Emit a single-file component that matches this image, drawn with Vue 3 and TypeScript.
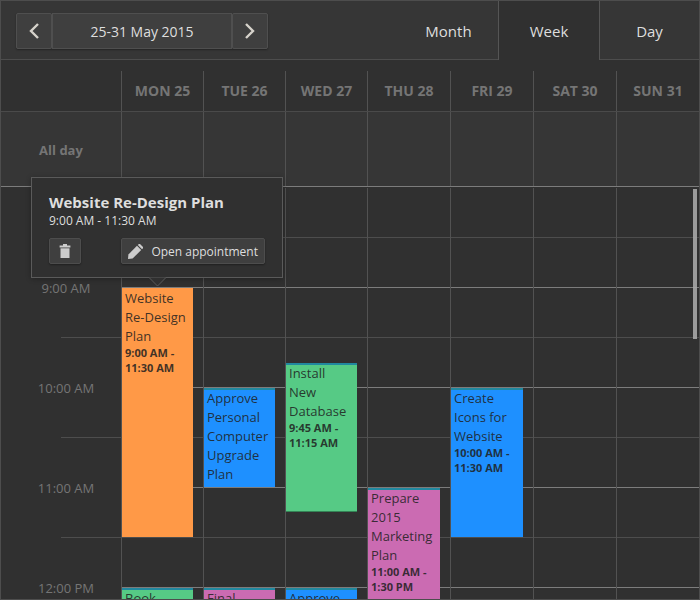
<script setup lang="ts">
import { ref } from 'vue'

type View = 'Month' | 'Week' | 'Day'
type Tone = 'orange' | 'blue' | 'green' | 'pink'

interface Appointment {
  title: string
  time: string
  /** Minutes from midnight */
  start: number
  end: number
  tone: Tone
  selected?: boolean
}

interface DayColumn {
  label: string
  items: Appointment[]
}

const FIRST_HOUR = 8
const LAST_HOUR = 12
const SLOT_MINUTES = 15

const views: View[] = ['Month', 'Week', 'Day']
const activeView = ref<View>('Week')

const at = (hours: number, minutes = 0): number => hours * 60 + minutes

const days: DayColumn[] = [
  {
    label: 'MON 25',
    items: [
      { title: 'Website Re-Design Plan', time: '9:00 AM - 11:30 AM', start: at(9), end: at(11, 30), tone: 'orange', selected: true },
      { title: 'Book', time: '', start: at(12), end: at(13), tone: 'green' },
    ],
  },
  {
    label: 'TUE 26',
    items: [
      { title: 'Approve Personal Computer Upgrade Plan', time: '', start: at(10), end: at(11), tone: 'blue' },
      { title: 'Final', time: '', start: at(12), end: at(13, 30), tone: 'pink' },
    ],
  },
  {
    label: 'WED 27',
    items: [
      { title: 'Install New Database', time: '9:45 AM - 11:15 AM', start: at(9, 45), end: at(11, 15), tone: 'green' },
      { title: 'Approve', time: '', start: at(12), end: at(13), tone: 'blue' },
    ],
  },
  {
    label: 'THU 28',
    items: [
      { title: 'Prepare 2015 Marketing Plan', time: '11:00 AM - 1:30 PM', start: at(11), end: at(13, 30), tone: 'pink' },
    ],
  },
  {
    label: 'FRI 29',
    items: [
      { title: 'Create Icons for Website', time: '10:00 AM - 11:30 AM', start: at(10), end: at(11, 30), tone: 'blue' },
    ],
  },
  { label: 'SAT 30', items: [] },
  { label: 'SUN 31', items: [] },
]

const hours: string[] = []
for (let h = FIRST_HOUR + 1; h <= LAST_HOUR; h++) {
  hours.push(`${h > 12 ? h - 12 : h}:00 ${h >= 12 ? 'PM' : 'AM'}`)
}

const line = (minutes: number): number => (minutes - FIRST_HOUR * 60) / SLOT_MINUTES + 1
const span = (a: Appointment) => ({ gridRow: `${line(a.start)} / ${line(a.end)}` })
</script>

<template>
  <main class="scheduler">
    <header class="toolbar">
      <div class="toolbar-left">
        <div class="navigator">
          <button type="button" class="nav-step" aria-label="Previous week">
            <svg viewBox="0 0 12 18" width="12" height="18"><path d="M10 2 L3 9 L10 16" /></svg>
          </button>
          <button type="button" class="nav-range">25-31 May 2015</button>
          <button type="button" class="nav-step" aria-label="Next week">
            <svg viewBox="0 0 12 18" width="12" height="18"><path d="M2 2 L9 9 L2 16" /></svg>
          </button>
        </div>
      </div>
      <nav class="views">
        <button
          v-for="view in views"
          :key="view"
          type="button"
          class="view"
          :class="{ active: view === activeView }"
          @click="activeView = view"
        >{{ view }}</button>
      </nav>
    </header>

    <div class="columns day-names">
      <div></div>
      <div v-for="day in days" :key="day.label" class="day-name">{{ day.label }}</div>
    </div>

    <div class="columns all-day">
      <div class="all-day-label">All day</div>
      <div v-for="day in days" :key="day.label" class="all-day-cell"></div>
    </div>

    <section class="body">
      <div class="scroller">
        <div class="columns timetable">
          <div class="hours">
            <div v-for="hour in hours" :key="hour" class="hour">{{ hour }}</div>
          </div>
          <div v-for="day in days" :key="day.label" class="day">
            <article
              v-for="item in day.items"
              :key="item.title"
              class="appointment"
              :class="[item.tone, { selected: item.selected }]"
              :style="span(item)"
            >
              <div class="appointment-title">{{ item.title }}</div>
              <div v-if="item.time" class="appointment-time">{{ item.time }}</div>
            </article>
          </div>
        </div>
      </div>
      <div class="thumb"></div>
    </section>

    <aside class="popover">
      <h2>Website Re-Design Plan</h2>
      <p>9:00 AM - 11:30 AM</p>
      <div class="popover-actions">
        <button type="button" class="action delete" aria-label="Delete appointment">
          <svg viewBox="0 0 12 14" width="12" height="14">
            <path d="M4 0h4v1.4h3.4v2H.6v-2H4z" />
            <path d="M1.5 4.3h9V14h-9z" />
          </svg>
        </button>
        <button type="button" class="action">
          <svg viewBox="0 0 15 15" width="15" height="15">
            <path d="M0 15l.4-4.6L9 1.8l4.2 4.2L4.6 14.6z" />
            <path d="M9.8 1L10.8 0H12l3 3v1.2l-1 1z" />
          </svg>
          <span>Open appointment</span>
        </button>
      </div>
      <svg class="pointer" viewBox="0 0 17 10" width="17" height="10">
        <path d="M0 0.5L8.5 9L17 0.5" />
      </svg>
    </aside>
  </main>
</template>

<style>
body {
  background: #303030;
}
</style>

<style scoped>
.scheduler {
  position: relative;
  box-sizing: border-box;
  display: flex;
  flex-direction: column;
  height: 100vh;
  border: 1px solid #4d4d4d;
  background: #303030;
  color: #dedede;
  font-family: "Open Sans", "Noto Sans", sans-serif;
  font-size: 13px;
}

button {
  margin: 0;
  padding: 0;
  font: inherit;
  color: inherit;
  cursor: pointer;
}

.toolbar {
  display: flex;
  flex: none;
  height: 59px;
}

.toolbar-left {
  flex: 1;
  padding: 12px 15px 0;
  border-bottom: 1px solid #4d4d4d;
  background: #363636;
}

.navigator {
  display: flex;
  width: 252px;
  height: 36px;
  border-radius: 2px;
  box-shadow: 0 1px 2px rgba(0, 0, 0, 0.35);
}

.nav-step,
.nav-range {
  display: flex;
  align-items: center;
  justify-content: center;
  box-sizing: border-box;
  border: 1px solid #4f4f4f;
  background: #3f3f3f;
}

.nav-step {
  width: 36px;
  border-radius: 2px;
}

.nav-step path {
  fill: none;
  stroke: #d6d2cb;
  stroke-width: 2.4;
}

.nav-range {
  flex: 1;
  font-size: 14px;
}

.views {
  display: flex;
}

.view {
  box-sizing: border-box;
  width: 99px;
  padding-top: 1px;
  border: 0;
  border-bottom: 1px solid #4d4d4d;
  background: #363636;
  font-size: 15px;
}

.view.active {
  width: 102px;
  padding-top: 0;
  border: 0 solid #555555;
  border-width: 0 1px;
  background: #303030;
}

.columns {
  display: grid;
  grid-template-columns: 120px 82fr 82fr 82fr 83fr 83fr 83fr 83fr;
}

.day-names {
  flex: none;
  padding-top: 11px;
}

.day-names,
.all-day {
  color: #757575;
  font-weight: 700;
}

.day-name {
  height: 40px;
  border-left: 1px solid #525252;
  font-size: 14px;
  line-height: 40px;
  text-align: center;
  white-space: nowrap;
}

.all-day {
  flex: none;
  height: 74px;
  border-top: 1px solid #4a4a4a;
  border-bottom: 1px solid #7c7c7c;
  background: #363636;
}

.all-day-label {
  align-self: center;
  padding-top: 2px;
  text-align: center;
}

.all-day-cell {
  border-left: 1px solid #525252;
}

.body {
  position: relative;
  flex: 1;
  min-height: 0;
}

.scroller {
  height: 100%;
  overflow-y: auto;
  scrollbar-width: none;
}

.timetable {
  padding-top: 1px;
}

.hours {
  padding-top: 50px;
  background-image: repeating-linear-gradient(
    transparent 0 49px,
    #4d4d4d 49px 50px,
    transparent 50px 100px
  );
  background-position: 60px 0;
  background-size: 60px 100%;
  background-repeat: no-repeat;
}

.hour {
  height: 100px;
  padding-left: 10px;
  color: #757575;
  line-height: 100px;
  text-align: center;
}

.day {
  display: grid;
  grid-auto-rows: 25px;
  align-content: start;
  border-left: 1px solid #525252;
  background: repeating-linear-gradient(
    transparent 0 49px,
    #4d4d4d 49px 50px,
    transparent 50px 99px,
    #7c7c7c 99px 100px
  );
}

.appointment {
  box-sizing: border-box;
  overflow: hidden;
  margin: 0 10px 1px 0;
  padding: 0 3px;
  border-top: 2px solid #21889f;
  color: rgba(32, 32, 32, 0.86);
}

.appointment.selected {
  padding-top: 2px;
  border-top: 0;
}

.orange {
  background: #ff9947;
}

.blue {
  background: #1e90ff;
}

.green {
  border-bottom: 1px solid #348456;
  background: #56ca85;
}

.pink {
  background: #cb6bb2;
}

.appointment-title {
  margin: -1px 0;
  line-height: 19px;
}

.appointment-time {
  font-size: 11px;
  font-weight: 700;
  line-height: 15px;
}

.thumb {
  position: absolute;
  top: 2px;
  right: 2px;
  width: 4px;
  height: 150px;
  background: rgba(170, 170, 170, 0.88);
}

.popover {
  position: absolute;
  top: 176px;
  left: 30px;
  box-sizing: border-box;
  width: 252px;
  padding: 15px 17px 13px;
  border: 1px solid #5a5a5a;
  background: #303030;
  box-shadow: 0 1px 5px rgba(0, 0, 0, 0.3);
}

.popover h2 {
  margin: 0;
  font-size: 15px;
  line-height: 18px;
  white-space: nowrap;
}

.popover p {
  margin: 0 0 7px;
  font-size: 12px;
  line-height: 20px;
}

.popover-actions {
  display: flex;
  justify-content: space-between;
}

.action {
  display: flex;
  align-items: center;
  justify-content: center;
  gap: 8px;
  box-sizing: border-box;
  height: 26px;
  padding: 0 6px;
  border: 1px solid #4d4d4d;
  border-radius: 2px;
  background: #3f3f3f;
  box-shadow: 0 1px 2px rgba(0, 0, 0, 0.35);
  font-size: 12px;
  white-space: nowrap;
}

.action.delete {
  width: 32px;
}

.action svg {
  flex: none;
  fill: #cccccc;
}

.pointer {
  position: absolute;
  top: 100%;
  left: 117px;
  fill: #303030;
  stroke: #5a5a5a;
}
</style>
